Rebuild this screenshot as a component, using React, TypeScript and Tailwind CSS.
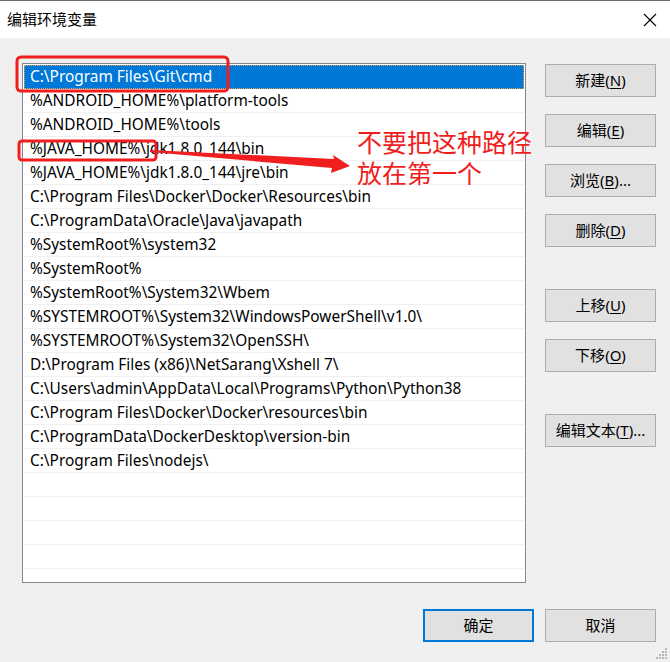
import React from "react";

const paths = [
  "C:\\Program Files\\Git\\cmd",
  "%ANDROID_HOME%\\platform-tools",
  "%ANDROID_HOME%\\tools",
  "%JAVA_HOME%\\jdk1.8.0_144\\bin",
  "%JAVA_HOME%\\jdk1.8.0_144\\jre\\bin",
  "C:\\Program Files\\Docker\\Docker\\Resources\\bin",
  "C:\\ProgramData\\Oracle\\Java\\javapath",
  "%SystemRoot%\\system32",
  "%SystemRoot%",
  "%SystemRoot%\\System32\\Wbem",
  "%SYSTEMROOT%\\System32\\WindowsPowerShell\\v1.0\\",
  "%SYSTEMROOT%\\System32\\OpenSSH\\",
  "D:\\Program Files (x86)\\NetSarang\\Xshell 7\\",
  "C:\\Users\\admin\\AppData\\Local\\Programs\\Python\\Python38",
  "C:\\Program Files\\Docker\\Docker\\resources\\bin",
  "C:\\ProgramData\\DockerDesktop\\version-bin",
  "C:\\Program Files\\nodejs\\",
];

const font = { fontFamily: '"Noto Sans", "Noto Sans CJK SC", sans-serif' };

function WinButton({ label, hotkey, suffix = "", className = "" }: { label: string; hotkey?: string; suffix?: string; className?: string }) {
  return (
    <button
      className={`flex h-[33px] w-[111px] items-center justify-center border border-[#adadad] bg-[#e1e1e1] text-[15px] text-black ${className}`}
    >
      {label}
      {hotkey && (
        <>
          (<span className="underline underline-offset-2">{hotkey}</span>)
        </>
      )}
      {suffix}
    </button>
  );
}

export default function App() {
  return (
    <div className="relative flex h-[662px] w-[670px] flex-col overflow-hidden bg-[#f0f0f0]" style={font}>
      {/* Title bar */}
      <div className="flex h-[38px] items-center justify-between border-t border-[#6b6b6b] bg-white pl-[7px] pr-[12px]">
        <span className="text-[15px] text-black">编辑环境变量</span>
        <svg width="16" height="16" viewBox="0 0 16 16" className="text-black">
          <path d="M2 2 L14 14 M14 2 L2 14" stroke="currentColor" strokeWidth="1.1" fill="none" />
        </svg>
      </div>

      {/* Body */}
      <div className="flex flex-1 flex-col pl-[22px] pr-[14px] pt-[25px]">
        <div className="flex gap-[19px]">
          {/* List */}
          <div className="h-[520px] w-[504px] border border-[#828790] bg-white px-[1px] pt-[1px]">
            {paths.map((p, i) => (
              <div
                key={p}
                className={
                  i === 0
                    ? "flex h-[24px] items-center border border-dotted border-[#e8a050] bg-[#0078d7] pl-[5px] text-[15.4px] text-white"
                    : "flex h-[24px] items-center border-b border-[#f0f0f0] pl-[6px] text-[15.4px] text-black"
                }
              >
                {p}
              </div>
            ))}
            {[0, 1, 2, 3, 4].map((k) => (
              <div key={k} className="h-[24px] border-b border-[#f0f0f0]" />
            ))}
          </div>

          {/* Side buttons */}
          <div className="flex flex-col pt-[1px]">
            <WinButton label="新建" hotkey="N" />
            <WinButton label="编辑" hotkey="E" className="mt-[17px]" />
            <WinButton label="浏览" hotkey="B" suffix="..." className="mt-[17px]" />
            <WinButton label="删除" hotkey="D" className="mt-[17px]" />
            <WinButton label="上移" hotkey="U" className="mt-[42px]" />
            <WinButton label="下移" hotkey="O" className="mt-[17px]" />
            <WinButton label="编辑文本" hotkey="T" suffix="..." className="mt-[42px]" />
          </div>
        </div>

        {/* Bottom buttons */}
        <div className="mt-[26px] flex justify-end gap-[11px]">
          <button className="flex h-[33px] w-[111px] items-center justify-center border-2 border-[#0078d7] bg-[#e1e1e1] text-[15px] text-black">
            确定
          </button>
          <WinButton label="取消" />
        </div>
      </div>

      {/* Size grip */}
      <svg className="absolute bottom-[2px] right-[2px]" width="12" height="12" viewBox="0 0 12 12">
        {[
          [9, 0],
          [6, 3],
          [9, 3],
          [3, 6],
          [6, 6],
          [9, 6],
          [0, 9],
          [3, 9],
          [6, 9],
          [9, 9],
        ].map(([x, y]) => (
          <rect key={`${x}-${y}`} x={x} y={y} width="2" height="2" fill="#b8b8b8" />
        ))}
      </svg>

      {/* Red annotations */}
      <svg className="pointer-events-none absolute left-0 top-0" width="670" height="662">
        <rect x="17" y="57" width="211" height="34" rx="4" fill="none" stroke="#f01e1e" strokeWidth="3" />
        <rect x="19" y="141" width="137" height="19" rx="3" fill="none" stroke="#f01e1e" strokeWidth="3" />
        <polygon points="150,150 334,159 333,155 350,166 331,173 332,168 150,152" fill="#f01e1e" />
      </svg>
      <div className="pointer-events-none absolute left-[357px] top-[127px] text-[25px] leading-[31px] text-[#f01e1e]">
        <div>不要把这种路径</div>
        <div>放在第一个</div>
      </div>
    </div>
  );
}
